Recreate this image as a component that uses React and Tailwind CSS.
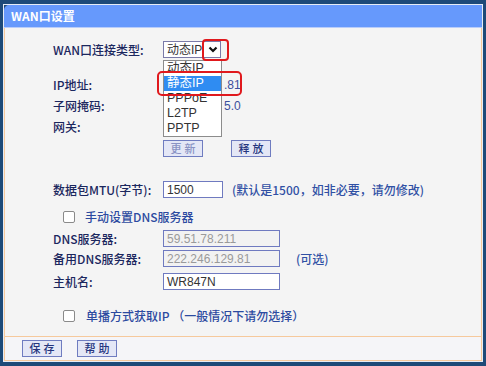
import React from 'react';

// Router "WAN口设置" page with the connection-type select opened.
const cjk = { fontFamily: '"Noto Sans CJK SC", "Liberation Sans", sans-serif' };
const latin = { fontFamily: '"Liberation Sans", "Noto Sans CJK SC", sans-serif' };

function Row({ label, h = 'h-[18px]', className = '', children }) {
  return (
    <div className={`flex items-center ${h} ${className}`}>
      <div className="w-[110px] shrink-0 text-[12px] font-medium text-[#1b275e] leading-none">{label}</div>
      {children}
    </div>
  );
}

function Btn({ children, disabled }) {
  return (
    <button
      className={`h-[17px] w-[40px] border border-[#6f7cc0] bg-[#e4e7f6] text-[11px] font-medium tracking-[3px] leading-none pl-[3px] ${
        disabled ? 'text-[#8a93c4]' : 'text-[#25357e]'
      }`}
    >
      {children}
    </button>
  );
}

function Input({ value, disabled, w = 'w-[117px]' }) {
  return (
    <div
      style={latin}
      className={`${w} h-[17px] border border-[#6f7ac0] px-[3px] flex items-center text-[12px] leading-none ${
        disabled ? 'bg-[#f2f2f2] text-[#9a9a9a]' : 'bg-white text-[#333]'
      }`}
    >
      {value}
    </div>
  );
}

function Check() {
  return <div className="w-[12px] h-[12px] border border-[#8a8a8a] bg-white rounded-[2px] shrink-0" />;
}

function Chevron() {
  return (
    <svg width="10" height="7" viewBox="0 0 10 7">
      <path d="M1.5 1.5 L5 5 L8.5 1.5" fill="none" stroke="#111" strokeWidth="2.2" />
    </svg>
  );
}

function TypeSelect() {
  const items = ['动态IP', '静态IP', 'PPPoE', 'L2TP', 'PPTP'];
  return (
    <div className="relative w-[58px] h-[17px]">
      <div className="w-full h-full border border-[#7a7aa8] bg-white flex items-center">
        <span style={latin} className="pl-[3px] text-[12px] text-[#333] leading-none flex-1">动态IP</span>
        <span className="w-[15px] flex justify-center"><Chevron /></span>
      </div>
      {/* opened list */}
      <div className="absolute left-0 top-[19px] w-[59px] border border-[#8c8c8c] bg-white z-10">
        {items.map((t, i) => (
          <div
            key={t}
            style={latin}
            className={`h-[15px] flex items-center pl-[3px] text-[12.5px] leading-none ${
              i === 1 ? 'bg-[#2f8cf2] text-white' : 'text-[#333]'
            }`}
          >
            {t}
          </div>
        ))}
      </div>
      {/* red highlight boxes */}
      <div className="absolute left-[39px] top-[-2px] w-[27px] h-[22px] border-2 border-[#e0191d] rounded-[4px] z-20" />
      <div className="absolute left-[-6px] top-[30px] w-[85px] h-[25px] border-2 border-[#e0191d] rounded-[5px] z-20" />
    </div>
  );
}

export default function App() {
  return (
    <div style={cjk} className="w-[486px] h-[366px] bg-[#1d4a78] pt-[4px] px-[3px] pb-[4px]">
      <div className="h-full border border-[#e6ecf5] flex flex-col">
        <div className="h-[23px] bg-[#6699fc] rounded-tl-[5px] border-b border-[#b9cdfa] flex items-center pl-[7px]">
          <span className="text-white text-[12px] font-bold leading-none">WAN口设置</span>
        </div>
        <div className="flex-1 flex flex-col bg-[#f4f4f4] border-x border-b border-[#f6c99c]">
          <div className="pl-[48px] pt-[13px] flex flex-col">
            <Row label="WAN口连接类型:" h="h-[17px]">
              <TypeSelect />
            </Row>
            {/* values sit under the open list; only their tails show */}
            <Row label="IP地址:" className="mt-[18px]">
              <span style={latin} className="ml-[61px] text-[12px] text-[#3b4f9c]">.81</span>
            </Row>
            <Row label="子网掩码:" className="mt-[3px]">
              <span style={latin} className="ml-[61px] text-[12px] text-[#3b4f9c]">5.0</span>
            </Row>
            <Row label="网关:" className="mt-[3px]">
              <span />
            </Row>
            <div className="flex mt-[4px] pl-[110px] gap-[28px]">
              <Btn disabled>更新</Btn>
              <Btn>释放</Btn>
            </div>
            <Row label="数据包MTU(字节):" h="h-[17px]" className="mt-[24px]">
              <Input value="1500" w="w-[60px]" />
              <span className="ml-[9px] text-[12px] font-medium text-[#3050a4] leading-none">(默认是1500，如非必要，请勿修改)</span>
            </Row>
            <div className="flex items-center h-[18px] mt-[10px] pl-[10px]">
              <Check />
              <span className="ml-[10px] text-[12px] font-medium text-[#2c4aa0] leading-none">手动设置DNS服务器</span>
            </div>
            <Row label="DNS服务器:" h="h-[17px]" className="mt-[4px]">
              <Input value="59.51.78.211" disabled />
            </Row>
            <Row label="备用DNS服务器:" h="h-[17px]" className="mt-[3px]">
              <Input value="222.246.129.81" disabled />
              <span className="ml-[16px] text-[12px] font-medium text-[#3050a4] leading-none">(可选)</span>
            </Row>
            <Row label="主机名:" h="h-[17px]" className="mt-[6px]">
              <Input value="WR847N" />
            </Row>
            <div className="flex items-center h-[18px] mt-[17px] pl-[10px]">
              <Check />
              <span className="ml-[11px] text-[12px] font-medium text-[#2c4aa0] leading-none">单播方式获取IP （一般情况下请勿选择）</span>
            </div>
          </div>
          <div className="mt-auto border-t border-[#f6c99c] h-[24px] bg-[#f5f5f8] flex items-center pl-[17px] gap-[15px]">
            <Btn>保存</Btn>
            <Btn>帮助</Btn>
          </div>
        </div>
      </div>
    </div>
  );
}
